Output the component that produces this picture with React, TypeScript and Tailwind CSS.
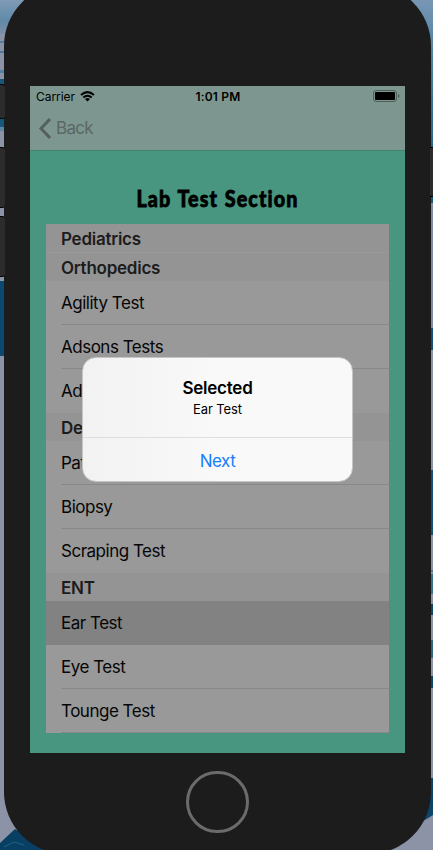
import type { ReactNode } from "react";

function SectionHeader({ children }: { children: ReactNode }) {
  return (
    <div className="flex h-7 items-center bg-[#949494] pt-[3px] pl-[15px] text-[17px] font-semibold tracking-[-0.25px] text-[#1c1c1c]">
      {children}
    </div>
  );
}

function Row({ children, selected, last }: { children: ReactNode; selected?: boolean; last?: boolean }) {
  return (
    <div className={`h-11 pl-[15px] ${selected ? "bg-[#828282]" : "bg-[#999999]"}`}>
      <div
        className={`flex h-11 items-center border-b pt-[2px] text-[17px] tracking-[-0.49px] text-[#060606] ${
          last ? "border-transparent" : "border-[#888888]"
        }`}
      >
        {children}
      </div>
    </div>
  );
}

function Wallpaper() {
  return (
    <svg className="absolute inset-0" width="433" height="850" viewBox="0 0 433 850">
      <defs>
        <linearGradient id="sky" x1="0" y1="0" x2="0" y2="1">
          <stop offset="0" stopColor="#809bb5" />
          <stop offset="0.6" stopColor="#5f8aa8" />
          <stop offset="1" stopColor="#7f8ea8" />
        </linearGradient>
        <linearGradient id="sea" x1="0" y1="0" x2="0" y2="1">
          <stop offset="0" stopColor="#7896b3" />
          <stop offset="0.4" stopColor="#4780a3" />
          <stop offset="1" stopColor="#286489" />
        </linearGradient>
      </defs>
      <rect width="433" height="850" fill="#8c93a7" />
      <rect width="216" height="34" fill="url(#sky)" />
      <rect y="41" width="5" height="2" fill="#547fa0" />
      <rect y="51" width="5" height="2" fill="#4b7897" />
      <rect y="70" width="5" height="3" fill="#547fa0" />
      <rect y="79" width="5" height="6" fill="#17577a" />
      <rect y="118" width="5" height="9" fill="#15587e" />
      <rect y="127" width="5" height="4" fill="#5d86a3" />
      <rect y="281" width="5" height="75" fill="#0c4970" />
      <path d="M0 843L15 829L50 850H0Z" fill="#083f62" />
      <path d="M4 847L14 842L24 845" fill="none" stroke="#1b6487" />
      <rect x="216" width="217" height="148" fill="url(#sea)" />
      <rect x="429" y="203" width="4" height="125" fill="#7e8ca2" />
      <rect x="429" y="196" width="4" height="7" fill="#12577d" />
      <rect x="429" y="328" width="4" height="22" fill="#135078" />
      <rect x="429" y="358" width="4" height="25" fill="#8c93a7" />
      <rect x="429" y="470" width="4" height="65" fill="#125078" />
      <rect x="429" y="570" width="4" height="2" fill="#507993" />
      <rect x="429" y="574" width="4" height="20" fill="#39708e" />
      <rect x="429" y="604" width="4" height="11" fill="#0c456c" />
      <rect x="429" y="640" width="4" height="18" fill="#2e6684" />
      <rect x="429" y="676" width="4" height="12" fill="#0c456c" />
      <path d="M433 778V815L420 823L424 778Z" fill="#0b4369" />
    </svg>
  );
}

export default function App() {
  return (
    <div className="relative h-[850px] w-[433px] overflow-hidden font-['Inter','Liberation_Sans',sans-serif]">
      <Wallpaper />
      <div className="absolute top-[-16px] left-1 h-[870px] w-[427px] rounded-[62px] bg-[#1c1c1c]" />
      <div className="absolute top-[84px] left-[-3px] h-[35px] w-2 rounded-[3px] border-y border-black bg-[#2c2c2c]" />
      <div className="absolute top-[147px] left-[-3px] h-[61px] w-2 rounded-[3px] border-y border-black bg-[#2c2c2c]" />
      <div className="absolute top-[216px] left-[-3px] h-[61px] w-2 rounded-[3px] border-y border-black bg-[#2c2c2c]" />
      <div className="absolute top-[147px] left-[430px] h-[50px] w-2 border-y border-black bg-[#2c2c2c]" />

      <div className="relative flex flex-col items-center pt-[86px]">
        <main className="relative mr-[-2px] h-[667px] w-[375px] bg-[#48967f]">
          <header className="h-[65px] border-b border-[#408370] bg-[#7d9790]">
            <div className="grid h-5 grid-cols-3 items-center pr-[5px] pl-[6px] text-[12px] text-black">
              <div className="flex items-center gap-[5px] pt-px tracking-[-0.05px]">
                <span>Carrier</span>
                <svg className="mb-px" width="15" height="11" viewBox="0 0 15 11" fill="none" stroke="black" strokeWidth="2">
                  <path d="M1 4Q7.5-1.7 14 4" />
                  <path d="M3.3 6.5Q7.5 2.9 11.7 6.5" />
                  <path d="M5 8Q7.5 6 10 8L7.5 10.5Z" fill="black" stroke="none" />
                </svg>
              </div>
              <div className="pt-px text-center font-semibold tracking-[0.2px] whitespace-nowrap">1:01 PM</div>
              <svg className="justify-self-end" width="27" height="12" viewBox="0 0 27 12">
                <rect x="0.5" y="0.5" width="23" height="11" rx="2.5" fill="none" stroke="#4d605a" />
                <rect x="2" y="2" width="20" height="8" rx="0.7" fill="black" />
                <path d="M25 4Q26.5 4.5 26.5 6Q26.5 7.5 25 8Z" fill="#4d605a" />
              </svg>
            </div>
            <div className="flex h-11 items-center gap-[5px] pl-[9px] text-[17px] tracking-[-0.7px] text-[#5b6763]">
              <svg width="12" height="21" viewBox="0 0 12 21" fill="none" stroke="#555f5c" strokeWidth="3">
                <path d="M11 1L2 10.5L11 20" />
              </svg>
              <span className="pt-[2px]">Back</span>
            </div>
          </header>

          <h1 className="mt-[32px] flex h-8 items-center justify-center pr-px font-['Lato','Liberation_Sans',sans-serif] text-[23.5px] font-black text-black">
            <span className="inline-block origin-center scale-x-[0.84] tracking-[1.3px] whitespace-nowrap [-webkit-text-stroke:0.8px_black] [word-spacing:1px]">
              Lab Test Section
            </span>
          </h1>

          <section className="mx-4 mt-[9px]">
            <SectionHeader>Pediatrics</SectionHeader>
            <div className="h-px bg-[#999999]" />
            <SectionHeader>Orthopedics</SectionHeader>
            <Row>Agility Test</Row>
            <Row>Adsons Tests</Row>
            <Row last>Adsons Test</Row>
            <SectionHeader>Dermatology</SectionHeader>
            <Row>Patch Test</Row>
            <Row>Biopsy</Row>
            <Row last>Scraping Test</Row>
            <SectionHeader>ENT</SectionHeader>
            <Row selected last>Ear Test</Row>
            <Row>Eye Test</Row>
            <Row>Tounge Test</Row>
          </section>

          <div
            role="dialog"
            className="absolute top-[271px] left-[52px] flex h-[125px] w-[271px] flex-col rounded-[14px] border border-[#c5c5c5] bg-linear-to-r from-[#f2f2f2] via-[#f9f9f9] via-50% to-[#f9f9f9] text-center"
          >
            <div className="h-[80px] border-b border-[#dedede] pt-[19px]">
              <h2 className="text-[17px] leading-[22px] font-semibold tracking-[-0.25px] text-black">Selected</h2>
              <p className="mt-px text-[13px] leading-[18px] tracking-[-0.1px] text-black">Ear Test</p>
            </div>
            <button className="flex-1 pt-[4px] text-[17px] tracking-[-0.5px] text-[#167efb]">Next</button>
          </div>
        </main>
        <div className="mt-[18px] mr-[-2px] h-[62px] w-[63px] rounded-full border-[3px] border-[#6b6b6b]" />
      </div>
    </div>
  );
}
